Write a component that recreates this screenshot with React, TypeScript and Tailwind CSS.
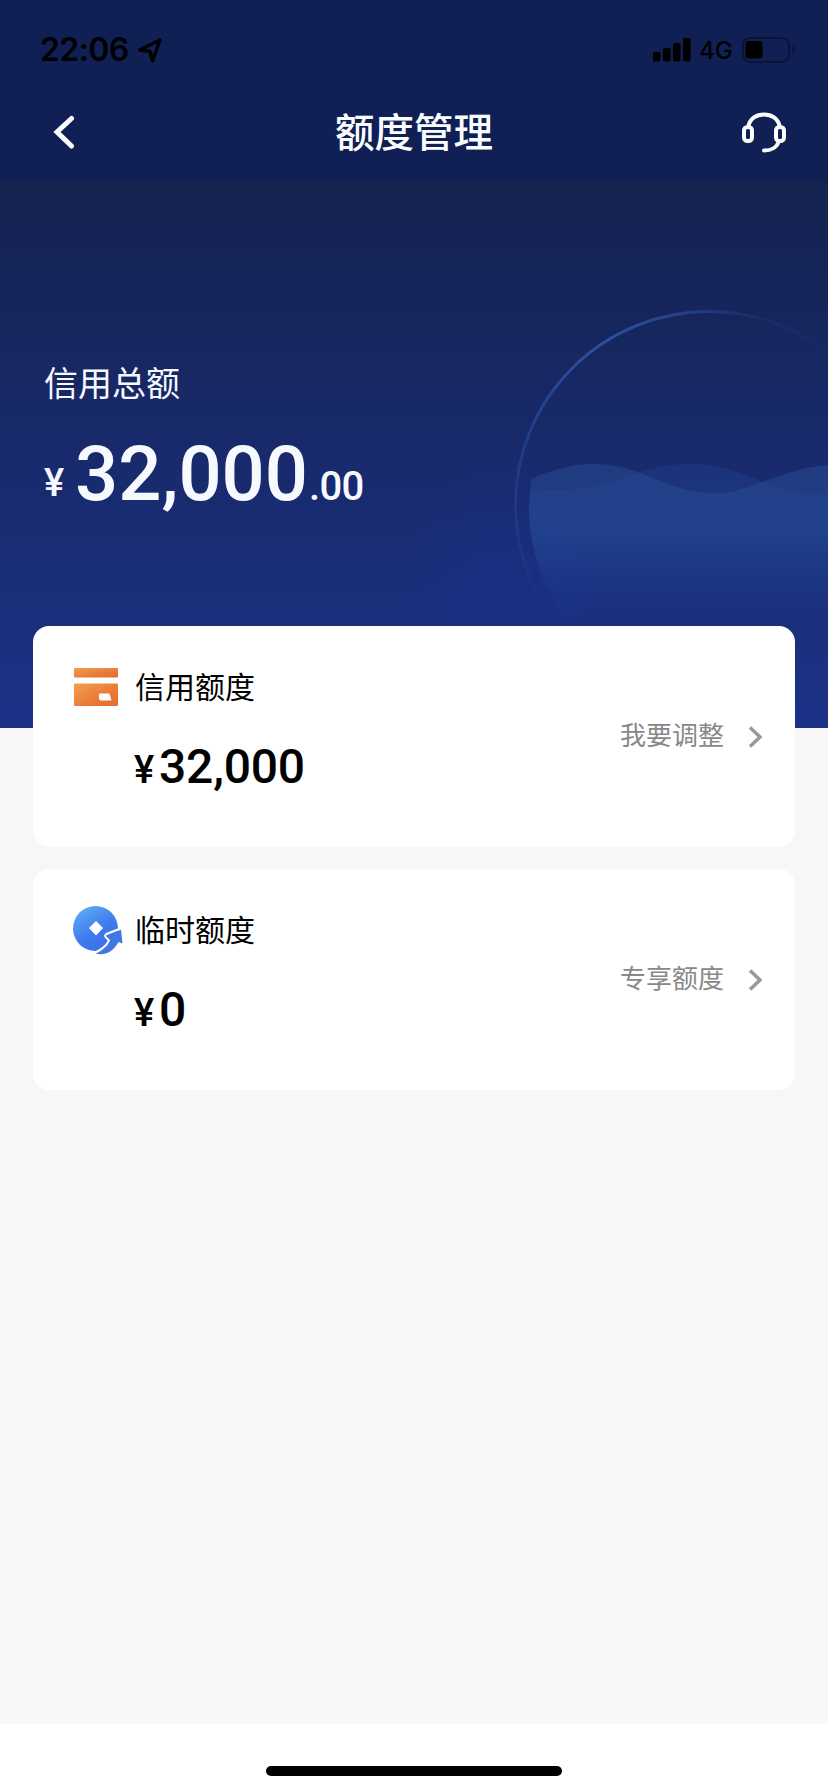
import type { FC } from "react";
import React from "react";

interface LimitCardProps {
  icon: React.ReactNode;
  title: string;
  amount: string;
  action: string;
}

const LocationIcon: FC = () => (
  <svg width="27" height="27" viewBox="0 0 27 27" fill="none">
    <path
      d="M2.5 13 23 3 15.5 24 13 14.500z"
      stroke="#000"
      strokeWidth="3.400"
      strokeLinejoin="round"
    />
  </svg>
);

const SignalIcon: FC = () => (
  <svg width="38" height="24" viewBox="0 0 38 24">
    <rect x="0" y="14" width="7.5" height="9.5" rx="1.5" />
    <rect x="10" y="10" width="7.5" height="13.5" rx="1.5" />
    <rect x="20" y="5" width="7.5" height="18.5" rx="1.5" />
    <rect x="30" y="0" width="7.5" height="23.5" rx="1.5" />
  </svg>
);

const BatteryIcon: FC = () => (
  <svg width="53" height="26" viewBox="0 0 53 26">
    <rect x="1" y="1" width="46" height="24" rx="7" fill="none" stroke="#000" strokeOpacity="0.4" strokeWidth="2" />
    <rect x="3.5" y="4" width="17" height="17.5" rx="3" />
    <path d="M50 9c2 .8 2.8 2.400 2.800 4s-.8 3.200-2.800 4z" fillOpacity="0.4" />
  </svg>
);

const HeadsetIcon: FC = () => (
  <svg className="mt-0.5" width="46" height="42" viewBox="0 0 46 42" fill="none" stroke="#fbfdff" strokeWidth="4">
    <rect x="3" y="15" width="8" height="14" rx="3.5" />
    <rect x="35" y="15" width="8" height="14" rx="3.5" />
    <path d="M7.500 14C9 6.500 15.500 2.500 23 2.500S37 6.500 38.500 14" />
    <path d="M37.500 30c-1.500 5-7 8.500-14.500 8.500" strokeLinecap="round" />
  </svg>
);

const CardIcon: FC = () => (
  <svg className="ml-px" width="44" height="38" viewBox="0 0 44 38">
    <defs>
      <linearGradient id="card" x1="0" y1="0" x2="1" y2="1">
        <stop offset="0" stopColor="#f0a04f" />
        <stop offset="0.6" stopColor="#e97a38" />
        <stop offset="1" stopColor="#e36a30" />
      </linearGradient>
    </defs>
    <rect width="44" height="9.500" rx="1" fill="url(#card)" />
    <rect y="15.500" width="44" height="22.500" rx="1" fill="url(#card)" />
    <path d="M26 25.500h9.500l2 7H27q-2 0-2-2v-4q0-1 1-1z" fill="#fff" />
  </svg>
);

const CoinIcon: FC = () => (
  <svg width="50" height="49" viewBox="0 0 50 49">
    <defs>
      <linearGradient id="coin" x1="0.1" y1="0" x2="0.7" y2="1">
        <stop offset="0" stopColor="#5db2f5" />
        <stop offset="0.6" stopColor="#3f7aee" />
        <stop offset="1" stopColor="#3c6ee8" />
      </linearGradient>
    </defs>
    <circle cx="22.500" cy="22.500" r="22.500" fill="url(#coin)" />
    <path d="M23 15.500 29.500 22 23 29 16.500 22z" fill="#fff" stroke="#fff" strokeLinejoin="round" />
    {/* arrow cut out of the coin's lower right edge */}
    <path
      d="M22 47.500C30 44.500 35 40 37.500 34L32.500 30 48 23.500 49.500 37.500 45.500 36C41 44.500 33 50.500 22 47.500z"
      fill="#4077e4"
    />
    <path
      d="M20 47.500C27 44.500 33 41 36 34.500l-3-3q-2-2 .500-3.500l14-5.500"
      fill="none"
      stroke="#fff"
      strokeWidth="2"
    />
  </svg>
);

const WaveBall: FC = () => (
  <svg className="absolute bottom-0 right-0" width="428" height="447" viewBox="400 280 428 447" fill="none">
    <defs>
      <linearGradient id="ring" x1="590" y1="310" x2="560" y2="620" gradientUnits="userSpaceOnUse">
        <stop offset="0" stopColor="#3a68c0" stopOpacity="0.75" />
        <stop offset="0.45" stopColor="#284ca8" stopOpacity="0.55" />
        <stop offset="0.750" stopColor="#3a4a9c" stopOpacity="0.3" />
        <stop offset="1" stopColor="#3a4a9c" stopOpacity="0" />
      </linearGradient>
      <linearGradient id="fade" x1="600" y1="0" x2="828" y2="0" gradientUnits="userSpaceOnUse">
        <stop offset="0" stopColor="#fff" />
        <stop offset="0.450" stopColor="#fff" stopOpacity="0.45" />
        <stop offset="0.700" stopColor="#fff" stopOpacity="0.12" />
        <stop offset="1" stopColor="#fff" stopOpacity="0.08" />
      </linearGradient>
      <mask id="ringMask" maskUnits="userSpaceOnUse" x="400" y="280" width="428" height="447">
        <rect x="400" y="280" width="428" height="447" fill="url(#fade)" />
      </mask>
      <linearGradient id="front" x1="0" y1="463" x2="0" y2="625" gradientUnits="userSpaceOnUse">
        <stop offset="0" stopColor="#2a4c94" stopOpacity="0.5" />
        <stop offset="0.4" stopColor="#254b98" stopOpacity="0.5" />
        <stop offset="1" stopColor="#1c3a96" stopOpacity="0" />
      </linearGradient>
      <linearGradient id="back" x1="0" y1="463" x2="0" y2="625" gradientUnits="userSpaceOnUse">
        <stop offset="0" stopColor="#25489a" stopOpacity="0.3" />
        <stop offset="0.4" stopColor="#254b98" stopOpacity="0.35" />
        <stop offset="1" stopColor="#1c3a96" stopOpacity="0" />
      </linearGradient>
      <radialGradient id="glow">
        <stop offset="0" stopColor="#1a3290" stopOpacity="0.4" />
        <stop offset="1" stopColor="#1a3290" stopOpacity="0" />
      </radialGradient>
      <clipPath id="ball">
        <circle cx="709" cy="508" r="180" />
      </clipPath>
    </defs>
    <ellipse cx="500" cy="600" rx="100" ry="150" fill="url(#glow)" />
    <circle cx="709" cy="504" r="193.500" stroke="url(#ring)" strokeWidth="2.800" mask="url(#ringMask)" />
    <g clipPath="url(#ball)">
      <path d="M520 488C565 492 600 487 630 475S700 456 745 474S800 492 828 493V640H520z" fill="url(#back)" />
      <path d="M520 484C560 462 600 456 640 472S695 494 722 492S790 466 828 464V640H520z" fill="url(#front)" />
    </g>
  </svg>
);

const LimitCard: FC<LimitCardProps> = ({ icon, title, amount, action }) => (
  <section className="flex h-[221px] items-start justify-between rounded-2xl bg-white pl-10 pr-[33px]">
    <div className="pt-[39px]">
      <div className="flex h-11 items-center">
        <div className="flex w-[62px] shrink-0">{icon}</div>
        <h2 className="pt-px text-[30px] leading-[44px]">{title}</h2>
      </div>
      <p className="mt-[30px] flex items-baseline pl-[61px] font-medium leading-[56px]">
        <span className="w-[25px] text-[38px]">¥</span>
        <span className="text-[48px] tracking-[-0.2px]">{amount}</span>
      </p>
    </div>
    <div className="mt-[90px] flex items-center text-[#888888]">
      <span className="pt-0.5 text-[26px] leading-[36px]">{action}</span>
      <svg className="ml-6 mt-1" width="14" height="22" viewBox="0 0 14 22" fill="none">
        <path d="M2 1.500 12 11 2 20.500" stroke="#999" strokeWidth="3.400" />
      </svg>
    </div>
  </section>
);

export default function App() {
  return (
    <main className="flex h-[1792px] w-[828px] flex-col bg-[#f7f7f7] font-['Roboto','Noto_Sans_CJK_SC',sans-serif] text-black">
      <header className="h-[180px] bg-[#102055]">
        <div className="flex h-[100px] items-center justify-between pl-10 pr-[33px] font-['Inter',sans-serif]">
          <div className="flex items-center">
            <span className="w-[97px] text-[32px] font-semibold tracking-[-0.6px]">22:06</span>
            <LocationIcon />
          </div>
          <div className="flex items-center">
            <SignalIcon />
            <span className="ml-2 w-[43px] pt-0.5 text-[24px] font-medium">4G</span>
            <BatteryIcon />
          </div>
        </div>
        <div className="flex h-16 items-center justify-between pl-[53px] pr-[41px] text-[#fbfdff]">
          <svg width="34" height="34" viewBox="0 0 34 34" fill="none">
            <path d="M18.500 3.500 4 17 18.500 31" stroke="currentColor" strokeWidth="5" strokeLinecap="round" />
          </svg>
          <h1 className="pt-1 text-[39.5px] font-medium leading-none">额度管理</h1>
          <HeadsetIcon />
        </div>
      </header>
      <div className="relative h-[548px] bg-linear-to-b from-[#14224e] via-[#182a6c] to-[#1c3287] pl-[44px] text-[#f6faff]">
        <WaveBall />
        <p className="pt-[179px] text-[34px] leading-[50px]">信用总额</p>
        <p className="mt-5 flex items-baseline font-medium leading-[90px]">
          <span className="relative -top-1 w-[31px] text-[38px]">¥</span>
          <span className="text-[76px]">32,000</span>
          <span className="ml-px text-[40px] tracking-[-0.7px]">.00</span>
        </p>
      </div>
      <div className="relative -mt-[102px] flex flex-col gap-[22px] px-[33px]">
        <LimitCard icon={<CardIcon />} title="信用额度" amount="32,000" action="我要调整" />
        <LimitCard icon={<CoinIcon />} title="临时额度" amount="0" action="专享额度" />
      </div>
      <footer className="mt-auto flex h-[68px] justify-center bg-white pt-[42px]">
        <div className="h-[10px] w-[296px] rounded-full bg-black" />
      </footer>
    </main>
  );
}
